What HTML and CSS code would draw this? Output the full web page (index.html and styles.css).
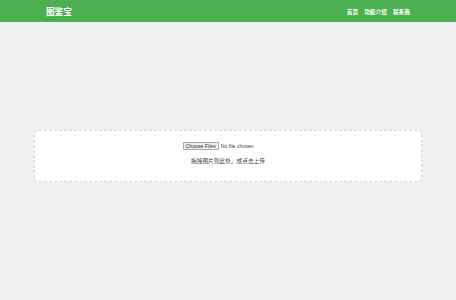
FILE: index.html
```html
<!DOCTYPE html>
<html lang="zh">
<head>
<meta charset="utf-8">
<title>图鉴宝</title>
<link rel="stylesheet" href="styles.css">
</head>
<body>
<header class="topbar">
  <div class="logo">图鉴宝</div>
  <nav class="nav">
    <a href="#">首页</a>
    <a href="#">功能介绍</a>
    <a href="#">联系我</a>
  </nav>
</header>
<main class="main">
  <div class="upload">
    <input class="file" type="file" multiple>
    <p class="hint">拖拽图片到此处，或点击上传</p>
  </div>
</main>
</body>
</html>
```
FILE: styles.css
```css
html, body {
  margin: 0;
  padding: 0;
}
body {
  background: #efefef;
  font-family: "Liberation Sans", "Noto Sans CJK SC", sans-serif;
  height: 300px;
}
.topbar {
  height: 22px;
  background: #4caf50;
  display: flex;
  align-items: center;
  justify-content: space-between;
  padding: 0 46px;
}
.logo {
  color: #fff;
  font-size: 8.6px;
  font-weight: bold;
}
.nav {
  display: flex;
  gap: 6px;
}
.nav a {
  color: #fff;
  text-decoration: none;
  font-size: 5.7px;
  font-weight: bold;
}
.main {
  padding-top: 108px;
}
.upload {
  width: 386px;
  margin: 0 auto;
  background: #fff;
  border: 1px dashed #d6d6d6;
  border-radius: 5px;
  padding: 11px 0 0;
  height: 39px;
  display: flex;
  flex-direction: column;
  align-items: center;
}
.file {
  font-size: 5.2px;
  font-family: "Liberation Sans", sans-serif;
  color: #444;
  margin: 0 0 0 8px;
}
.file::file-selector-button {
  font-size: 5.2px;
  padding: 0 2px;
  margin-right: 2px;
  background: #efefef;
  border: 1px solid #aaa;
  border-radius: 1px;
  color: #333;
}
.hint {
  margin: 6px 0 0;
  font-size: 5.7px;
  color: #444;
}
```
